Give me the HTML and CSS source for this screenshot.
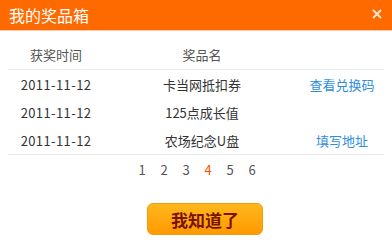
FILE: index.html
```html
<!DOCTYPE html>
<html lang="zh-CN">
<head>
  <meta charset="UTF-8">
  <title>我的奖品箱</title>
  <link rel="stylesheet" href="styles.css">
</head>
<body>
  <div class="dialog">
    <div class="header">
      <span class="title">我的奖品箱</span>
      <svg class="close" width="10" height="10" viewBox="0 0 10 10">
        <path d="M1 1 L9 9 M9 1 L1 9" stroke="#ffe8d6" stroke-width="1.8" />
      </svg>
    </div>
    <div class="content">
      <table class="prizes">
        <thead>
          <tr>
            <th class="col-date">获奖时间</th>
            <th class="col-name">奖品名</th>
            <th class="col-act"></th>
          </tr>
        </thead>
        <tbody>
          <tr>
            <td class="date">2011-11-12</td>
            <td>卡当网抵扣券</td>
            <td><a href="#">查看兑换码</a></td>
          </tr>
          <tr>
            <td class="date">2011-11-12</td>
            <td>125点成长值</td>
            <td></td>
          </tr>
          <tr>
            <td class="date">2011-11-12</td>
            <td>农场纪念U盘</td>
            <td><a href="#">填写地址</a></td>
          </tr>
        </tbody>
      </table>
      <div class="pager">
        <a href="#">1</a>
        <a href="#">2</a>
        <a href="#">3</a>
        <a href="#" class="current">4</a>
        <a href="#">5</a>
        <a href="#">6</a>
      </div>
      <div class="actions">
        <button class="ok-button">我知道了</button>
      </div>
    </div>
  </div>
</body>
</html>
```

FILE: styles.css
```css
body {
  margin: 0;
  padding: 0;
  background-color: #ffffff;
  font-family: "Noto Sans CJK SC", "DejaVu Sans", sans-serif;
  font-size: 13px;
  color: #333333;
}
.dialog {
  width: 392px;
  height: 240px;
  overflow: hidden;
}
.header {
  height: 30px;
  background-color: #ff6a00;
  border-bottom: 1px solid #f7c9a8;
  display: flex;
  align-items: center;
  justify-content: space-between;
  padding: 0 10px 0 9px;
}
.title {
  color: #ffffff;
  font-size: 16px;
}
.close {
  display: block;
  margin-bottom: 3px;
}
.content {
  padding: 9px 8px 0 8px;
}
.prizes {
  width: 376px;
  border-collapse: collapse;
}
.prizes th {
  font-weight: normal;
  color: #555555;
  height: 29px;
  border-bottom: 1px solid #e4ecf2;
  padding: 0;
}
.prizes td {
  height: 28px;
  padding: 0;
  text-align: center;
}
.prizes td.date {
  letter-spacing: 0.4px;
}
.prizes tbody tr:last-child td {
  border-bottom: 1px solid #e8e8e8;
}
.col-date {
  width: 96px;
}
.col-act {
  width: 84px;
}
.prizes a {
  color: #2f8fdb;
  text-decoration: none;
}
.pager {
  display: flex;
  justify-content: center;
  gap: 14px;
  margin-top: 5px;
  margin-left: 2px;
  height: 20px;
  line-height: 20px;
}
.pager a {
  color: #555555;
  text-decoration: none;
  width: 8px;
  text-align: center;
}
.pager a.current {
  color: #ff5000;
}
.actions {
  margin-top: 23px;
  padding-left: 139px;
}
.ok-button {
  width: 116px;
  height: 32px;
  border: 1px solid #f09a10;
  border-radius: 6px;
  background: linear-gradient(#ffb71c, #ff9a00);
  color: #7a1200;
  font-family: "Noto Sans CJK SC", sans-serif;
  font-size: 17px;
  font-weight: bold;
  cursor: pointer;
  padding: 0;
}
```
